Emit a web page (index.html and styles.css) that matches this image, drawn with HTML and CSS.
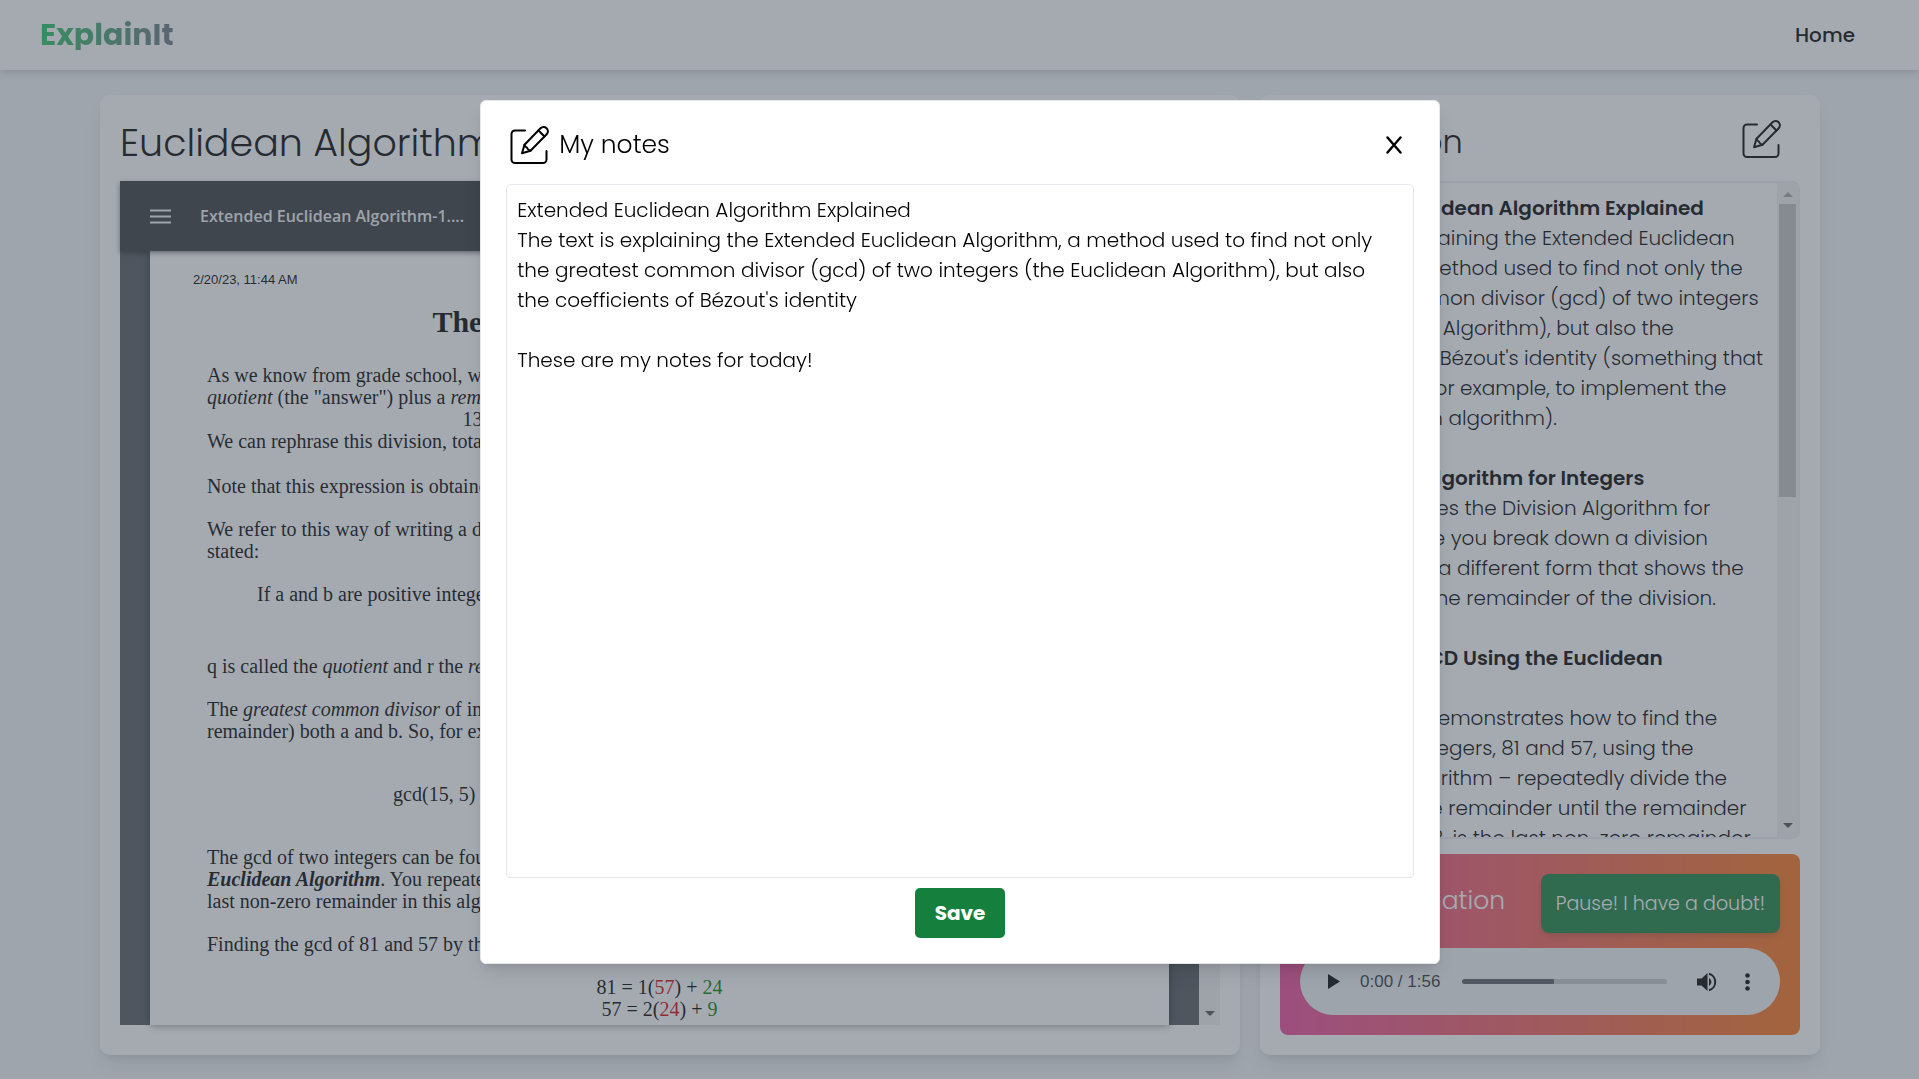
FILE: index.html
```html
<!DOCTYPE html>
<html lang="en">
<head>
<meta charset="utf-8">
<title>ExplainIt</title>
<link rel="stylesheet" href="styles.css">
</head>
<body>
<svg class="sprite" aria-hidden="true">
  <symbol id="edit" viewBox="0 0 40 40">
    <g fill="none" stroke="currentColor" stroke-width="2" stroke-linecap="round" stroke-linejoin="round">
      <path d="M15 5.500H5a3.500 3.500 0 0 0-3.500 3.500V34.500a3.500 3.500 0 0 0 3.500 3.500H33a3.500 3.500 0 0 0 3.500-3.500V26"/>
      <path d="M14.500 19.800 30.500 3.300a4.200 4.200 0 0 1 6.200 6L20.500 25.800 12 28.300Z"/>
      <path d="M14.500 19.800c.5 2 1 2.500 2.500 3 .5 1.500 1.500 2.500 3.500 3M28.500 5.500l6 6"/>
    </g>
  </symbol>
</svg>

<header class="navbar">
  <a class="brand" href="#">ExplainIt</a>
  <nav><a class="nav-link" href="#">Home</a></nav>
</header>

<main class="workspace">
  <section class="card document">
    <h1 class="document-title">Euclidean Algorithm</h1>
    <div class="viewer">
      <div class="viewer-bar">
        <button class="menu" type="button" aria-label="Toggle sidebar"><svg width="21" height="15" viewBox="0 0 21 15"><path d="M0 1.500h21M0 7.500h21M0 13.500h21" stroke="currentColor" stroke-width="2"/></svg></button>
        <span>Extended Euclidean Algorithm-1....</span>
      </div>
      <div class="viewer-body">
        <article class="page">
          <p class="stamp">2/20/23, 11:44 AM</p>
          <h2>The Extended Euclidean Algorithm</h2>
          <p>As we know from grade school, when we divide one<br><i>quotient</i> (the "answer") plus a <i>remainder</i></p>
          <p class="formula">13 divided by 5 equals 2 with the remainder of 3.</p>
          <p class="wide">We can rephrase this division, totally in terms of integers</p>
          <p>Note that this expression is obtained from the original one</p>
          <p>We refer to this way of writing a division of integers as<br>stated:</p>
          <p class="quote">If a and b are positive integers, there exist unique integers</p>
          <p>q is called the <i>quotient</i> and r the <i>remainder</i></p>
          <p>The <i>greatest common divisor</i> of integers a and b is the<br>remainder) both a and b. So, for example:</p>
          <p class="example">gcd(15, 5) = 5, gcd(17, 9) = 1, gcd(12, 9) = 3, and gcd(81, 57) = 3.</p>
          <p>The gcd of two integers can be found by repeated use of the<br><b><i>Euclidean Algorithm</i></b>. You repeatedly divide the divisor<br>last non-zero remainder in this algorithm.</p>
          <p>Finding the gcd of 81 and 57 by the Euclidean Algorithm:</p>
          <p class="formula">81 = 1(<span class="red">57</span>) + <span class="green">24</span><br>57 = 2(<span class="red">24</span>) + <span class="green">9</span></p>
        </article>
        <div class="scrollbar"><i class="arrow up"></i><i class="arrow down"></i></div>
      </div>
    </div>
  </section>

  <section class="card explanation">
    <div class="explanation-head">
      <h2>Explanation</h2>
      <button class="icon-button" type="button" aria-label="Open notes"><svg width="40" height="40"><use href="#edit"/></svg></button>
    </div>
    <div class="transcript">
      <div class="transcript-text">
        <p><b>Extended Euclidean Algorithm Explained</b><br>The text is explaining the Extended Euclidean<br>Algorithm, a method used to find not only the<br>greatest common divisor (gcd) of two integers<br>(the Euclidean Algorithm), but also the<br>coefficients of Bézout's identity (something that<br>can be used, for example, to implement the<br>RSA encryption algorithm).</p>
        <p><b>The Division Algorithm for Integers</b><br>It then describes the Division Algorithm for<br>Integers, where you break down a division<br>problems into a different form that shows the<br>quotient and the remainder of the division.</p>
        <p><b>Finding the GCD Using the Euclidean<br>Algorithm</b><br>The text next demonstrates how to find the<br>GCD of two integers, 81 and 57, using the<br>Euclidean Algorithm – repeatedly divide the<br>divisor with the remainder until the remainder<br>is 0. The GCD, 3, is the last non-zero remainder</p>
      </div>
      <div class="scrollbar"><i class="arrow up"></i><i class="thumb"></i><i class="arrow down"></i></div>
    </div>
    <div class="audio-card">
      <div class="audio-head">
        <h3>Live Explanation</h3>
        <button class="pause" type="button">Pause! I have a doubt!</button>
      </div>
      <div class="player">
        <button class="icon-button" type="button" aria-label="Play"><svg width="12" height="15" viewBox="0 0 12 15"><path d="M0 0v15l12-7.500z" fill="currentColor"/></svg></button>
        <span class="time">0:00 / 1:56</span>
        <input class="seek" type="range" min="0" max="116" value="0" aria-label="Seek">
        <button class="icon-button" type="button" aria-label="Mute"><svg width="20" height="20" viewBox="0 0 20 20"><path d="M0 6.500v7h4.500l6 5.500V1L4.500 6.500z" fill="currentColor"/><path d="M12 6v8a4.500 4.500 0 0 0 0-8z" fill="currentColor"/><path d="M12 1.800a8.500 8.500 0 0 1 0 16.400" fill="none" stroke="currentColor" stroke-width="2"/></svg></button>
        <button class="icon-button" type="button" aria-label="More options"><svg width="5" height="18" viewBox="0 0 5 18"><g fill="currentColor"><circle cx="2.500" cy="2.500" r="2.300"/><circle cx="2.500" cy="9" r="2.300"/><circle cx="2.500" cy="15.500" r="2.300"/></g></svg></button>
      </div>
    </div>
  </section>
</main>

<div class="overlay">
  <form class="modal" role="dialog" aria-labelledby="notes-title">
    <div class="modal-head">
      <svg width="40" height="40" aria-hidden="true"><use href="#edit"/></svg>
      <label id="notes-title" for="notes">My notes</label>
      <button class="icon-button" type="button" aria-label="Close"><svg width="16" height="18" viewBox="0 0 16 18"><path d="M1.500 1.500l13 15M14.500 1.500l-13 15" stroke="currentColor" stroke-width="2.400" stroke-linecap="round"/></svg></button>
    </div>
    <textarea id="notes" spellcheck="false">Extended Euclidean Algorithm Explained
The text is explaining the Extended Euclidean Algorithm, a method used to find not only the greatest common divisor (gcd) of two integers (the Euclidean Algorithm), but also the coefficients of Bézout's identity

These are my notes for today!</textarea>
    <button class="save" type="submit">Save</button>
  </form>
</div>
</body>
</html>
```

FILE: styles.css
```css
*, *::before, *::after { box-sizing: border-box; }

body {
  margin: 0;
  height: 100vh;
  display: flex;
  flex-direction: column;
  background: #f3f4f6;
  color: #000;
  font: 300 20px/30px Poppins, Inter, sans-serif;
  overflow: hidden;
}

h1, h2, h3, p { margin: 0; font-weight: inherit; }
button { font: inherit; color: inherit; border: 0; padding: 0; background: none; }
svg { display: block; }
a { text-decoration: none; }
.sprite { position: absolute; width: 0; height: 0; }
.icon-button { display: flex; }

/* Header */
.navbar {
  flex: none;
  height: 70px;
  padding: 0 64px 0 40px;
  display: flex;
  align-items: center;
  justify-content: space-between;
  background: #fff;
  box-shadow: 0 5px 8px -1px #0000001a, 0 3px 5px -2px #0000001a;
}
.brand {
  font-size: 30px;
  font-weight: 700;
  background: linear-gradient(to right, #22c55e, #6b7280);
  background-clip: text;
  color: transparent;
}
.nav-link { color: inherit; font-weight: 500; }

/* Two cards */
.workspace {
  flex: 1;
  min-height: 0;
  padding: 25px 99px 24px 100px;
  display: grid;
  grid-template-columns: repeat(3, minmax(0, 1fr));
  grid-template-rows: minmax(0, 1fr);
  gap: 20px;
}
.card {
  display: flex;
  flex-direction: column;
  min-width: 0;
  padding: 20px;
  background: #fff;
  border-radius: 10px;
  box-shadow: 0 12px 19px -4px #0000001a, 0 5px 8px -4px #0000001a;
}
.document { grid-column: span 2; padding-bottom: 30px; }
.document-title { font-size: 38px; line-height: 56px; padding-bottom: 10px; }

/* PDF viewer */
.viewer { flex: 1; min-height: 0; display: flex; flex-direction: column; background: #525659; }
.viewer-bar {
  flex: none;
  height: 70px;
  padding: 0 30px;
  display: flex;
  align-items: center;
  gap: 29px;
  position: relative;
  background: #323639;
  color: #f1f1f1;
  font: 600 16px/24px "Segoe UI", "Open Sans", sans-serif;
  box-shadow: 0 2px 5px #00000080;
}
.viewer-body { flex: 1; min-height: 0; display: flex; }
.page {
  flex: 1;
  margin: 0 30px;
  padding: 17px 57px 0;
  overflow: hidden;
  background: #fff;
  box-shadow: 0 0 8px #00000080;
  font: 20px/22px "Liberation Serif", serif;
  white-space: nowrap;
}
.page p { margin-bottom: 21px; }
.page .stamp { margin: 0 0 12px -14px; font: 13px/24px "Liberation Sans", sans-serif; }
.page h2 { margin-bottom: 24px; font-size: 30px; font-weight: 700; line-height: 36px; text-align: center; }
.page .formula { text-align: center; }
.page h2 + p, .page h2 + p + .formula { margin-bottom: 0; }
.page .wide { margin-bottom: 23px; }
.page .quote { margin-bottom: 50px; padding-left: 50px; }
.page .example { margin: 41px 0; text-align: center; }
.red { color: #d50000; }
.green { color: #008000; }

/* Scrollbars */
.scrollbar {
  flex: none;
  width: 21px;
  display: flex;
  flex-direction: column;
  align-items: center;
  padding: 9px 0;
  background: #f1f1f1;
}
.arrow { border: 5px solid transparent; }
.arrow.up { border-top: 0; border-bottom-color: #a3a3a3; }
.arrow.down { border-bottom: 0; border-top-color: #505050; margin-top: auto; }
.thumb { width: 17px; height: 46%; margin-top: 7px; background: #c1c1c1; }

/* Explanation */
.explanation-head {
  display: flex;
  align-items: flex-end;
  justify-content: space-between;
  padding: 4px 18px 22px 0;
}
.explanation-head h2 { font-size: 32px; line-height: 34px; }
.transcript {
  flex: 1;
  min-height: 0;
  display: flex;
  overflow: hidden;
  border: 2px solid #eceef2;
  border-radius: 8px;
}
.transcript-text { flex: 1; min-width: 0; padding: 10px 0 0 13px; white-space: nowrap; }
.transcript-text p { margin-bottom: 30px; }
.transcript-text b { font-weight: 600; }

.audio-card {
  flex: none;
  margin-top: 15px;
  padding: 20px;
  border-radius: 8px;
  background: linear-gradient(to right, #ec4899, #f97316);
  color: #fff;
}
.audio-head { display: flex; justify-content: space-between; align-items: center; margin-bottom: 15px; }
.audio-head h3 { font-size: 25px; padding: 0 0 6px 10px; }
.pause {
  padding: 15px;
  border-radius: 8px;
  background: #15803d;
  font-size: 19px;
  line-height: 29px;
  box-shadow: 0 5px 8px -1px #0000001a, 0 3px 5px -2px #0000001a;
}
.player {
  height: 67px;
  padding: 0 30px 0 28px;
  display: flex;
  align-items: center;
  gap: 20px;
  border-radius: 34px;
  background: #f1f3f4;
  color: #000;
}
.time { font: 400 17px/24px "Liberation Sans", sans-serif; color: #333; }
.seek {
  appearance: none;
  flex: 1;
  min-width: 0;
  height: 5px;
  margin: 0 10px 0 2px;
  border-radius: 3px;
  background: linear-gradient(to right, #5b5d62 45%, #c4c6c8 45%);
}
.seek::-webkit-slider-thumb { appearance: none; width: 0; height: 0; }
.player .icon-button:last-child { margin-left: 8px; }

/* Notes dialog */
.overlay {
  position: fixed;
  inset: 0;
  display: flex;
  align-items: flex-start;
  justify-content: center;
  padding-top: 100px;
  background: #4b556380;
}
.modal {
  width: 50%;
  height: calc(80vh + 1px);
  margin-left: 1px;
  padding: 24px 25px 25px;
  display: flex;
  flex-direction: column;
  align-items: center;
  border: 1px solid #e5e7eb;
  border-radius: 6px;
  background: #fff;
  box-shadow: 0 12px 19px -4px #0000001a, 0 5px 8px -4px #0000001a;
}
.modal-head {
  align-self: stretch;
  display: flex;
  align-items: center;
  gap: 9px;
  padding: 0 12px 19px 4px;
  font-size: 25px;
}
.modal-head label { flex: 1; }
textarea {
  flex: 1;
  align-self: stretch;
  padding: 10px;
  border: 1px solid #e5e7eb;
  border-radius: 5px;
  outline: 0;
  resize: none;
  font: inherit;
  color: inherit;
}
.save {
  margin-top: 10px;
  padding: 10px 20px;
  border-radius: 5px;
  background: #15803d;
  color: #fff;
  font-weight: 700;
}
```
